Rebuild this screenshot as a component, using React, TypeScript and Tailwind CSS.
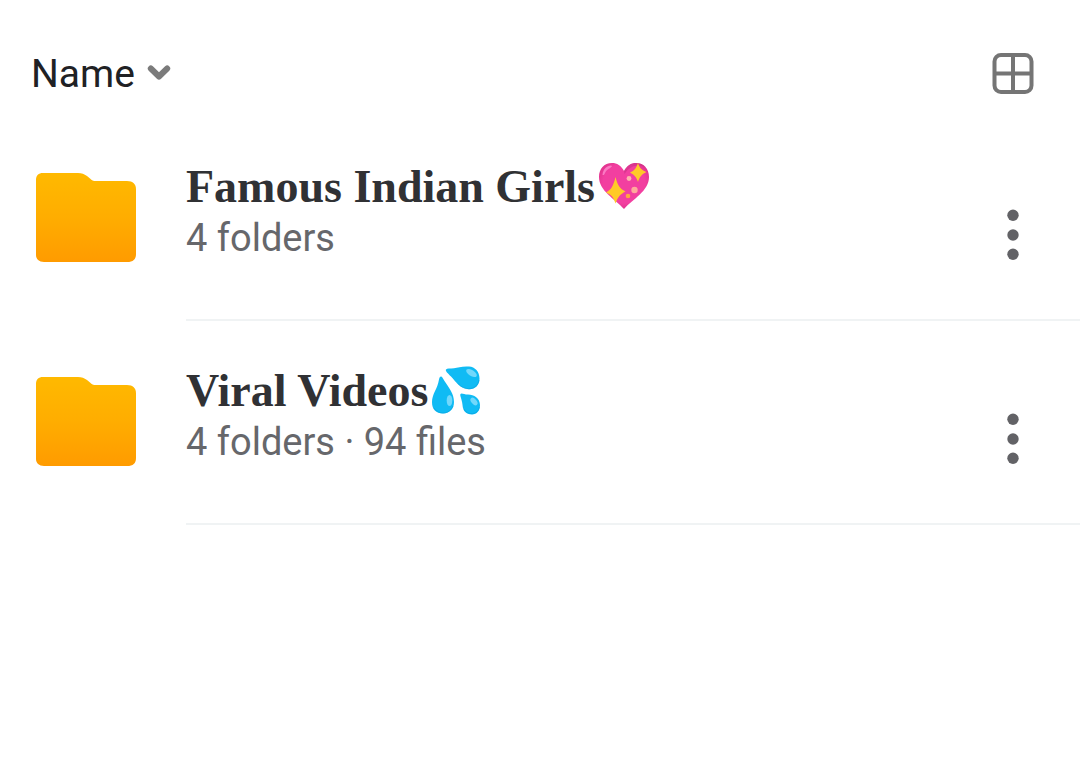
import { useId } from "react";

type Folder = { name: string; details: string; emoji: "heart" | "drops" };

const folders: Folder[] = [
  { name: "Famous Indian Girls", details: "4 folders", emoji: "heart" },
  { name: "Viral Videos", details: "4 folders · 94 files", emoji: "drops" },
];

function ChevronIcon() {
  return (
    <svg viewBox="0 0 24 20" className="h-5 w-6" fill="none" stroke="#7b7b7b" strokeWidth="6" strokeLinecap="round" strokeLinejoin="round" aria-hidden="true">
      <path d="M3.800 4.500 12 12.500 20.200 4.500" />
    </svg>
  );
}

function GridIcon() {
  return (
    <svg viewBox="0 0 42 42" className="size-[42px]" fill="none" stroke="#757575" strokeWidth="4" aria-hidden="true">
      <rect x="2.500" y="2" width="37" height="37" rx="6.500" />
      <path d="M21 2v37M2.500 20.500h37" />
    </svg>
  );
}

function FolderIcon() {
  const id = useId();
  return (
    <svg viewBox="0 0 100 90" className="h-[90px] w-[100px]" aria-hidden="true">
      <defs>
        <linearGradient id={id} x1="0" y1="0" x2="0" y2="1">
          <stop offset="0" stopColor="#ffb900" />
          <stop offset="0.5" stopColor="#ffad00" />
          <stop offset="1" stopColor="#ff9b00" />
        </linearGradient>
      </defs>
      <path
        fill={`url(#${id})`}
        d="M7 0H42C46 0 48 1 51 3L54 5.500C56 7.500 57 8 60 8H91C97 8 100 11 100 16.500V81C100 86.500 97 89 91 89H8C3 89 0 86 0 82V7C0 2.500 2.500 0 7 0Z"
      />
    </svg>
  );
}

function HeartEmoji() {
  const id = useId();
  return (
    <svg viewBox="0 0 50 48" className="h-12 w-[50px]" role="img" aria-label="Sparkling heart">
      <defs>
        <radialGradient id={id} cx="0.5" cy="0.45" r="0.6">
          <stop offset="0.7" stopColor="#f23fa0" />
          <stop offset="1" stopColor="#dc2f88" />
        </radialGradient>
      </defs>
      <path fill={`url(#${id})`} d="M25 8C22 2.500 18 0 13 0 5 0 0 6 0 14 0 28 16 36 25 46 34 36 50 28 50 14 50 6 45 0 37 0 32 0 28 2.500 25 8Z" />
      <path fill="#c4307f" d="M25 8C28 2.500 32 0 37 0 41 0 44 1.500 46.500 4 40 1 31 2 25.500 11Z" opacity=".5" />
      <path fill="#fb79c3" d="M3.500 12C4 6 8 2.500 12 2.500 14 3 12 4.500 9.500 6 7 7.500 6 10 5 12Z" />
      <g fill="#ffc928">
        <path d="M16.500 14C18.800 22.500 20.500 25.500 26.500 28.500 21 31.500 19 33.500 16.500 40.500 14 33.500 12.500 32 7 29.500 12.500 26.500 14.200 23 16.500 14Z" />
        <path d="M39 0C40.500 5 42.500 7 47.500 9 42.500 11.500 40.800 13.500 39 19 37 13.500 35.500 12 31 9.500 35.500 7.500 37.200 5 39 0Z" />
      </g>
      <circle cx="30" cy="15.500" r="2.400" fill="#ffb2ae" />
      <circle cx="35.500" cy="27" r="3.200" fill="#ffa99c" />
      <circle cx="29" cy="33" r="2.300" fill="#ffa640" />
    </svg>
  );
}

function DropsEmoji() {
  return (
    <svg viewBox="0 0 50 50" className="size-[50px]" role="img" aria-label="Sweat droplets">
      <g fill="#10bbf4">
        <path d="M9 10.500C10 10.500 11 12.500 12.500 15 17 22 22 27.500 22 36 22 43.500 17 47.500 11 47.500 4 47.500 0 43.500 0 36 0 28 5.500 23 7 13.500 7.400 11.500 8 10.500 9 10.500Z" />
        <path d="M14 3.500C15 2 18 2.700 22 2.200 26 1.700 30 0 37 .5 43 1 47.500 5.500 47.500 12.500 47.500 19.500 43 23.500 37 23.200 28 22.800 24 16 19 10.500 16 7.500 13 5 14 3.500Z" />
        <path d="M28.500 28C29.500 26.500 32 28.500 36 28.500 42 28.500 48 32.500 48 39 48 44.500 45 48.500 40 48.500 34 48.500 31 45 30.500 39 30 33 27.500 29.500 28.500 28Z" />
      </g>
      <g fill="#72d8fb">
        <ellipse cx="17.500" cy="34.500" rx="2.800" ry="5.500" />
        <ellipse cx="39.500" cy="7" rx="6" ry="3" transform="rotate(32 39.500 7)" />
        <ellipse cx="42" cy="35.500" rx="4.500" ry="2.500" transform="rotate(48 42 35.500)" />
      </g>
      <g fill="none" stroke="#079edb" strokeWidth="1" opacity=".5">
        <path d="M2 42C7 49 17 49 21 40" />
        <path d="M26 17.500C32 25 45 25 47 14" />
        <path d="M32 43C35 49.500 46 49.500 47.500 41" />
      </g>
    </svg>
  );
}

function MoreIcon() {
  return (
    <svg viewBox="0 0 12 52" className="h-[52px] w-3" fill="#626266" aria-hidden="true">
      <circle cx="6" cy="6.300" r="5.700" />
      <circle cx="6" cy="26" r="5.700" />
      <circle cx="6" cy="45.300" r="5.700" />
    </svg>
  );
}

function FolderRow({ folder }: { folder: Folder }) {
  return (
    <li className="flex pl-9">
      <div className="shrink-0 pt-14">
        <FolderIcon />
      </div>
      <div className="ml-[50px] flex min-w-0 flex-1 items-start justify-between border-b-2 border-[#f0f3f4] pt-11 pr-[61px] pb-14">
        <div className="min-w-0">
          <h2 className="flex h-[52px] items-center gap-1 whitespace-nowrap font-['Liberation_Serif',serif] text-[46px] leading-[52px] font-bold text-[#303134]">
            {folder.name}
            {folder.emoji === "heart" ? <HeartEmoji /> : <DropsEmoji />}
          </h2>
          <p className="text-[38px] leading-[50px] text-[#66676b]">{folder.details}</p>
        </div>
        <button type="button" aria-label={`More options for ${folder.name}`} className="mt-12 cursor-pointer">
          <MoreIcon />
        </button>
      </div>
    </li>
  );
}

export default function App() {
  return (
    <main className="min-h-screen bg-white font-[Roboto,sans-serif]">
      <header className="flex items-center justify-between pt-12 pr-[46px] pb-[17px] pl-[31px]">
        <button type="button" className="flex cursor-pointer items-center gap-3 text-[39px] leading-[52px] text-[#202124]">
          Name
          <ChevronIcon />
        </button>
        <button type="button" aria-label="Grid view" className="cursor-pointer">
          <GridIcon />
        </button>
      </header>
      <ul>
        {folders.map((folder) => (
          <FolderRow key={folder.name} folder={folder} />
        ))}
      </ul>
    </main>
  );
}
